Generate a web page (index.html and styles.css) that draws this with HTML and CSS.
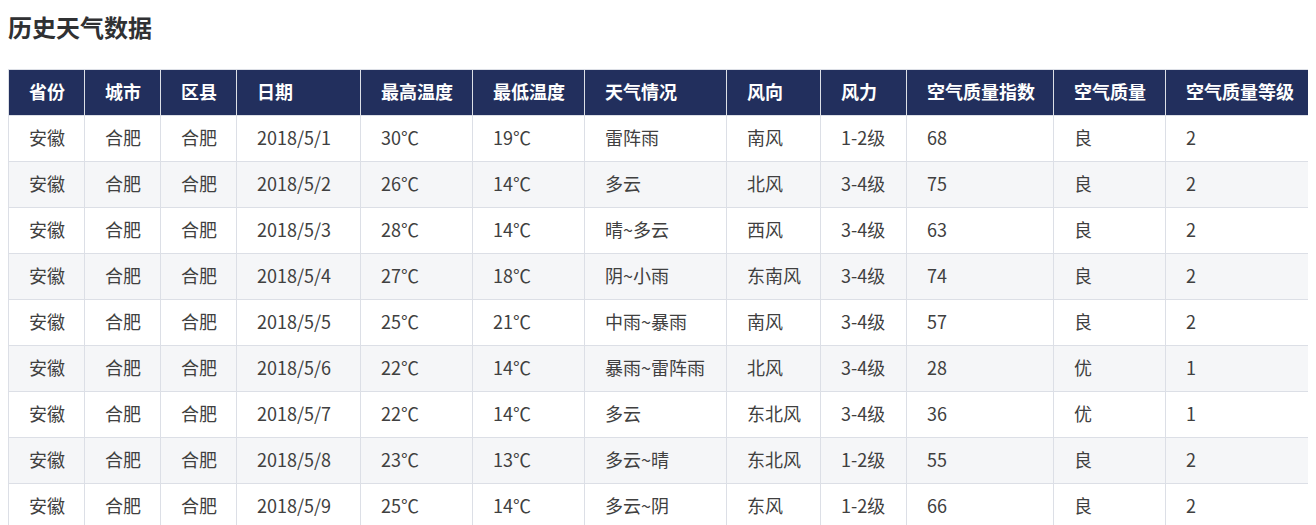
FILE: index.html
```html
<!DOCTYPE html>
<html lang="zh-CN">
<head>
<meta charset="utf-8">
<title>历史天气数据</title>
<link rel="stylesheet" href="styles.css">
</head>
<body>
<h2 class="title">历史天气数据</h2>
<table class="weather">
  <colgroup>
    <col class="c-prov"><col class="c-city"><col class="c-county"><col class="c-date">
    <col class="c-high"><col class="c-low"><col class="c-cond"><col class="c-wdir">
    <col class="c-wpow"><col class="c-aqi"><col class="c-aq"><col class="c-aql">
  </colgroup>
  <thead>
    <tr><th>省份</th><th>城市</th><th>区县</th><th>日期</th><th>最高温度</th><th>最低温度</th><th>天气情况</th><th>风向</th><th>风力</th><th>空气质量指数</th><th>空气质量</th><th>空气质量等级</th></tr>
  </thead>
  <tbody>
    <tr><td>安徽</td><td>合肥</td><td>合肥</td><td>2018/5/1</td><td>30℃</td><td>19℃</td><td>雷阵雨</td><td>南风</td><td>1-2级</td><td>68</td><td>良</td><td>2</td></tr>
    <tr><td>安徽</td><td>合肥</td><td>合肥</td><td>2018/5/2</td><td>26℃</td><td>14℃</td><td>多云</td><td>北风</td><td>3-4级</td><td>75</td><td>良</td><td>2</td></tr>
    <tr><td>安徽</td><td>合肥</td><td>合肥</td><td>2018/5/3</td><td>28℃</td><td>14℃</td><td>晴~多云</td><td>西风</td><td>3-4级</td><td>63</td><td>良</td><td>2</td></tr>
    <tr><td>安徽</td><td>合肥</td><td>合肥</td><td>2018/5/4</td><td>27℃</td><td>18℃</td><td>阴~小雨</td><td>东南风</td><td>3-4级</td><td>74</td><td>良</td><td>2</td></tr>
    <tr><td>安徽</td><td>合肥</td><td>合肥</td><td>2018/5/5</td><td>25℃</td><td>21℃</td><td>中雨~暴雨</td><td>南风</td><td>3-4级</td><td>57</td><td>良</td><td>2</td></tr>
    <tr><td>安徽</td><td>合肥</td><td>合肥</td><td>2018/5/6</td><td>22℃</td><td>14℃</td><td>暴雨~雷阵雨</td><td>北风</td><td>3-4级</td><td>28</td><td>优</td><td>1</td></tr>
    <tr><td>安徽</td><td>合肥</td><td>合肥</td><td>2018/5/7</td><td>22℃</td><td>14℃</td><td>多云</td><td>东北风</td><td>3-4级</td><td>36</td><td>优</td><td>1</td></tr>
    <tr><td>安徽</td><td>合肥</td><td>合肥</td><td>2018/5/8</td><td>23℃</td><td>13℃</td><td>多云~晴</td><td>东北风</td><td>1-2级</td><td>55</td><td>良</td><td>2</td></tr>
    <tr><td>安徽</td><td>合肥</td><td>合肥</td><td>2018/5/9</td><td>25℃</td><td>14℃</td><td>多云~阴</td><td>东风</td><td>1-2级</td><td>66</td><td>良</td><td>2</td></tr>
  </tbody>
</table>
</body>
</html>
```

FILE: styles.css
```css
html, body {
  background: #ffffff;
}
body {
  margin: 8px;
  font-family: "Noto Sans CJK SC", "Noto Sans", sans-serif;
  color: #333333;
}
.title {
  margin: 2px 0 25px 0;
  font-size: 24px;
  line-height: 34px;
  font-weight: 700;
  color: #303133;
}
.weather {
  border-collapse: collapse;
  table-layout: fixed;
  width: 1305px;
  font-size: 18px;
}
.c-prov, .c-city, .c-county { width: 76px; }
.c-date { width: 124px; }
.c-high, .c-low { width: 112px; }
.c-cond { width: 142px; }
.c-wdir { width: 94px; }
.c-wpow { width: 86px; }
.c-aqi { width: 147px; }
.c-aq { width: 112px; }
.c-aql { width: 148px; }
.weather th,
.weather td {
  border: 1px solid #dcdfe6;
  padding: 0 0 4px 20px;
  height: 46px;
  text-align: left;
  white-space: nowrap;
  line-height: 24px;
  box-sizing: border-box;
}
.weather th {
  background: #222f5d;
  color: #ffffff;
  font-weight: 700;
}
.weather td {
  color: #404040;
  font-weight: 400;
}
.weather tbody tr:nth-child(even) td {
  background: #f5f6f8;
}
```
